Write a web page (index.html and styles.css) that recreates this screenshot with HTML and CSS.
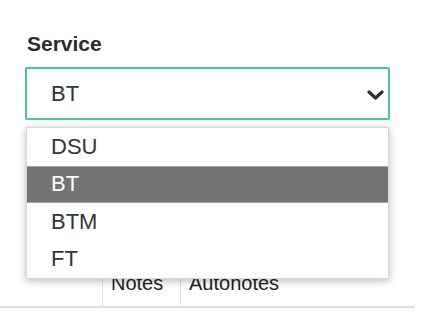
FILE: index.html
```html
<!DOCTYPE html>
<html>
<head>
<meta charset="utf-8">
<link rel="stylesheet" href="styles.css">
</head>
<body>
<div class="page">
  <div class="field">
    <div class="label">Service</div>
    <div class="select">
      <span class="value">BT</span>
      <svg class="chevron" width="17" height="10" viewBox="0 0 17 10"><polyline points="2,2 8.5,8 15,2" fill="none" stroke="#2e2e2e" stroke-width="3.2" stroke-linecap="round" stroke-linejoin="round"/></svg>
    </div>
    <ul class="menu">
      <li class="option">DSU</li>
      <li class="option selected">BT</li>
      <li class="option">BTM</li>
      <li class="option">FT</li>
    </ul>
  </div>
  <div class="table-head">
    <div class="cell cell-first"></div>
    <div class="cell cell-notes">Notes</div>
    <div class="cell cell-auto">Autonotes</div>
  </div>
</div>
</body>
</html>
```
FILE: styles.css
```css
html, body {
  margin: 0;
  padding: 0;
  background: #fff;
  font-family: "Liberation Sans", Arial, sans-serif;
}
.page {
  width: 415px;
  padding-top: 32px;
}
.field {
  position: relative;
  padding-left: 25px;
  width: 365px;
}
.label {
  font-weight: bold;
  font-size: 21px;
  line-height: 24px;
  color: #2b2b2b;
  padding-left: 2px;
}
.select {
  margin-top: 11px;
  height: 49px;
  border: 2px solid #4cc2a6;
  border-radius: 2px;
  display: flex;
  align-items: center;
  justify-content: space-between;
  padding: 0 4px 0 24px;
}
.value {
  font-size: 22px;
  color: #333;
}
.chevron {
  display: block;
  margin-top: 2px;
}
.menu {
  position: absolute;
  left: 26px;
  top: 95px;
  width: 361px;
  margin: 0;
  padding: 0;
  list-style: none;
  background: #fff;
  border: 1px solid #d8d8d8;
  box-shadow: 0 2px 8px rgba(0, 0, 0, 0.28);
  z-index: 2;
}
.option {
  height: 37.5px;
  display: flex;
  align-items: center;
  padding-left: 24px;
  font-size: 22px;
  color: #333;
  box-sizing: border-box;
}
.option.selected {
  background: #747474;
  color: #fff;
  border: 1px solid #a3a3a3;
  border-left: none;
  border-right: none;
}
.table-head {
  margin-top: 142px;
  display: flex;
  border-bottom: 2px solid #dcdcdc;
}
.cell {
  font-size: 20px;
  line-height: 24px;
  color: #222;
  padding: 9px 8px 11px 8px;
  height: 24px;
}
.cell-first {
  width: 86px;
  border-right: 1px solid #e2e2e2;
}
.cell-notes {
  width: 61px;
  border-right: 1px solid #e2e2e2;
}
.cell-auto {
  flex: 1;
}
```
